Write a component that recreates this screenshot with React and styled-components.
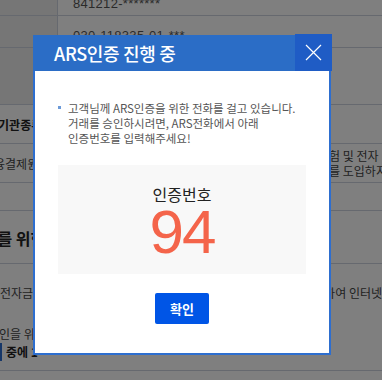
import React from 'react'
import styled, { createGlobalStyle } from 'styled-components'

const GlobalStyle = createGlobalStyle`
  html, body {
    margin: 0;
    padding: 0;
    background: #fff;
    font-family: "Noto Sans CJK KR", "Noto Sans", sans-serif;
    overflow: hidden;
  }
`

const Page = styled.div`
  position: relative;
  width: 382px;
  height: 380px;
  overflow: hidden;
  color: #444;
  font-size: 12px;
`

const Table = styled.div`
  margin-top: -16px;
`

const Row = styled.div`
  display: grid;
  grid-template-columns: 58px 1fr;
  height: ${(p) => p.h}px;
  border-top: ${(p) => (p.first ? 'none' : '1px solid #ccd3de')};
  box-sizing: border-box;
`

const HeadCell = styled.div`
  background: #ececec;
  border-right: 1px solid #ccd3de;
`

const Cell = styled.div`
  display: flex;
  align-items: center;
  padding: 7px 0 0 15px;
  font-family: "Liberation Sans", "Noto Sans CJK KR", sans-serif;
  font-size: 13px;
  color: #555;
  letter-spacing: 0.3px;
`

const InfoTable = styled.div`
  border-bottom: 1px solid #ccd3de;
`

const InfoRow = styled.div`
  display: flex;
  justify-content: space-between;
  align-items: center;
  height: ${(p) => p.h}px;
  border-top: 1px solid #ccd3de;
  box-sizing: border-box;
  font-size: 12px;
  color: #444;
  white-space: nowrap;
`

const Label = styled.span`
  margin-left: ${(p) => p.shift}px;
  font-weight: ${(p) => (p.bold ? 700 : 400)};
  color: ${(p) => (p.bold ? '#222' : '#444')};
`

const Right = styled.div`
  line-height: 15px;
  margin-right: -32px;
  width: 96px;
`

const Section = styled.h3`
  margin: 16px 0 0 -32px;
  font-size: 16px;
  font-weight: 700;
  color: #222;
  height: 36px;
  line-height: 22px;
  white-space: nowrap;
`

const Para = styled.p`
  margin: 0;
  display: flex;
  justify-content: space-between;
  font-size: 12px;
  line-height: 18px;
  color: #444;
  white-space: nowrap;
  border-top: 1px solid #ccd3de;
  padding-top: 20px;
  height: 62px;
  box-sizing: border-box;
`

const Lines = styled.div`
  font-size: 12px;
  line-height: 18px;
  color: #444;
  white-space: nowrap;
  margin-left: -12px;
  border-bottom: 1px solid #ccd3de;
  height: 45px;
`

const Strong = styled.span`
  display: inline-block;
  margin-left: 12px;
  font-weight: 700;
  color: #222;
  border-left: 2px solid #2f6fd0;
  padding-left: 4px;
`

const Dim = styled.div`
  position: absolute;
  inset: 0;
  background: rgba(0, 0, 0, 0.5);
`

const Modal = styled.div`
  position: absolute;
  left: 33px;
  top: 35px;
  width: 298px;
  height: 320px;
  box-sizing: border-box;
  border: 2px solid #2d6ecf;
  background: #fff;
  display: flex;
  flex-direction: column;
`

const Header = styled.div`
  position: relative;
  height: 36px;
  margin: -2px -2px 0;
  background: #2b6dc6;
  display: flex;
  align-items: center;
  padding-left: 21px;
  color: #fff;
  font-size: 18px;
  font-weight: 500;
  letter-spacing: -0.3px;
`

const Close = styled.button`
  position: absolute;
  top: -1px;
  right: -1px;
  width: 37px;
  height: 37px;
  border: 0;
  padding: 0;
  background: #1f5cc5;
  display: flex;
  align-items: center;
  justify-content: center;
  cursor: pointer;
`

const Body = styled.div`
  flex: 1;
  padding: 30px 23px 0;
  display: flex;
  flex-direction: column;
`

const Notice = styled.p`
  margin: 0;
  position: relative;
  padding-left: 10px;
  font-size: 11.5px;
  line-height: 15px;
  color: #555;
  &::before {
    content: '';
    position: absolute;
    left: 0;
    top: 5px;
    width: 3px;
    height: 3px;
    background: #6c9ad8;
  }
`

const CodeBox = styled.div`
  margin-top: 19px;
  height: 109px;
  background: #f8f8f8;
  display: flex;
  flex-direction: column;
  align-items: center;
`

const CodeLabel = styled.div`
  margin-top: 18px;
  font-size: 16px;
  line-height: 22px;
  color: #222;
`

const CodeNum = styled.div`
  margin-top: -4px;
  font-family: "Liberation Sans", sans-serif;
  font-size: 62px;
  line-height: 62px;
  color: #f4644a;
  letter-spacing: -2px;
`

const Actions = styled.div`
  display: flex;
  justify-content: center;
  margin-top: 19px;
`

const Button = styled.button`
  width: 54px;
  height: 31px;
  border: 0;
  border-radius: 2px;
  background: #0055e6;
  color: #fff;
  font-family: "Noto Sans CJK KR", sans-serif;
  font-size: 13px;
  font-weight: 700;
  cursor: pointer;
`

export default function App() {
  return (
    <>
      <GlobalStyle />
      <Page>
        <Table>
          <Row h={31} first>
            <HeadCell />
            <Cell>841212-*******</Cell>
          </Row>
          <Row h={32}>
            <HeadCell />
            <Cell>030-118335-01-***</Cell>
          </Row>
          <Row h={57}>
            <HeadCell />
            <Cell />
          </Row>
        </Table>
        <InfoTable>
          <InfoRow h={39}>
            <Label bold shift={-24}>금융기관종류</Label>
            <span />
          </InfoRow>
          <InfoRow h={39}>
            <Label shift={-17}>금융결제원</Label>
            <Right>
              보험 및 전자
              <br />
              제를 도입하지
            </Right>
          </InfoRow>
          <InfoRow h={28} />
        </InfoTable>
        <Section>거래를 위한</Section>
        <Para>
          <span>전자금융</span>
          <span>하여 인터넷</span>
        </Para>
        <Lines>
          본인을 위한
          <br />
          <Strong>중에 1</Strong>
        </Lines>
        <Dim />
        <Modal>
          <Header>
            ARS인증 진행 중
            <Close aria-label="닫기">
              <svg width="17" height="17" viewBox="0 0 17 17">
                <path d="M1 1L16 16M16 1L1 16" stroke="#fff" strokeWidth="1.2" />
              </svg>
            </Close>
          </Header>
          <Body>
            <Notice>
              고객님께 ARS인증을 위한 전화를 걸고 있습니다.
              <br />
              거래를 승인하시려면, ARS전화에서 아래
              <br />
              인증번호를 입력해주세요!
            </Notice>
            <CodeBox>
              <CodeLabel>인증번호</CodeLabel>
              <CodeNum>94</CodeNum>
            </CodeBox>
            <Actions>
              <Button>확인</Button>
            </Actions>
          </Body>
        </Modal>
      </Page>
    </>
  )
}
